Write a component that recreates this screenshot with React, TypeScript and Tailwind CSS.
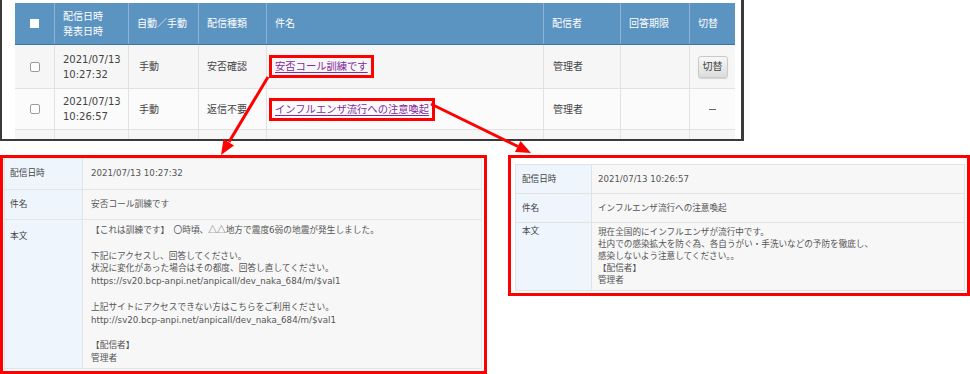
import React from "react";

const FONT = "font-[family-name:DejaVu_Sans,Noto_Sans_CJK_JP,sans-serif]";
const CJK = "font-[family-name:Noto_Sans_CJK_JP,sans-serif]";
const COLS = "grid grid-cols-[39px_74px_70px_68px_277px_77px_69px_46px]";

function HeaderCell({ children, first, center }: { children?: React.ReactNode; first?: boolean; center?: boolean }) {
  return (
    <div
      className={`flex items-center h-[41px] text-white text-[10px] leading-[15px] ${first ? "" : "border-l border-[#8db4d6]"} ${center ? "justify-center" : "pl-[8px]"}`}
    >
      {children}
    </div>
  );
}

function Cell({ children, first, center, pl, bg }: { children?: React.ReactNode; first?: boolean; center?: boolean; pl?: string; bg: string }) {
  return (
    <div
      className={`flex items-center border-b border-[#e2e2e2] ${bg} ${first ? "" : "border-l border-[#e2e2e2]"} ${center ? "justify-center" : pl ?? "pl-[8px]"}`}
    >
      {children}
    </div>
  );
}

function RowCheckbox() {
  return <span className="block w-[10px] h-[10px] bg-white border border-[#9c9c9c] rounded-[2px]" />;
}

function LinkBox({ children }: { children: React.ReactNode }) {
  return (
    <span className="inline-block border-[3px] border-[#ff0000] px-[3px] py-[1px]">
      <span className="text-[#822a9e] underline underline-offset-[2px] text-[10.3px] leading-[12px]">{children}</span>
    </span>
  );
}

function TopTable() {
  const r1 = "bg-[#f6f6f6]";
  const r2 = "bg-[#fbfbfb]";
  const r3 = "bg-[#f6f6f6]";
  return (
    <div className="w-[744px] h-[141px] border-l-2 border-r-[3px] border-b-2 border-[#3a3a3a] bg-white pl-[13px] pt-[3px] overflow-hidden">
      <div className="w-[720px] text-[#444] text-[10px] leading-[15px]">
        <div className={`${COLS} bg-[#5b93c1] border-b border-[#3f75a4]`}>
          <HeaderCell first center>
            <span className="block w-[9px] h-[9px] bg-white" />
          </HeaderCell>
          <HeaderCell>
            <span>
              配信日時
              <br />
              発表日時
            </span>
          </HeaderCell>
          <HeaderCell>自動／手動</HeaderCell>
          <HeaderCell>配信種類</HeaderCell>
          <HeaderCell>件名</HeaderCell>
          <HeaderCell>配信者</HeaderCell>
          <HeaderCell>回答期限</HeaderCell>
          <HeaderCell>切替</HeaderCell>
        </div>
        <div className={`${COLS} h-[44px]`}>
          <Cell first center bg={r1}>
            <RowCheckbox />
          </Cell>
          <Cell bg={r1}>
            <span>
              2021/07/13
              <br />
              10:27:32
            </span>
          </Cell>
          <Cell bg={r1} pl="pl-[10px]">手動</Cell>
          <Cell bg={r1}>安否確認</Cell>
          <Cell bg={r1} pl="pl-[2px]">
            <LinkBox>安否コール訓練です</LinkBox>
          </Cell>
          <Cell bg={r1} pl="pl-[9px]">管理者</Cell>
          <Cell bg={r1} />
          <Cell bg={r1} center>
            <span className="flex items-center justify-center w-[30px] h-[22px] rounded-[3px] border border-[#c9c9c9] bg-gradient-to-b from-[#f8f8f8] to-[#dcdcdc] text-[#444] text-[10px] shadow-[0_1px_1px_rgba(0,0,0,0.15)]">
              切替
            </span>
          </Cell>
        </div>
        <div className={`${COLS} h-[41px]`}>
          <Cell first center bg={r2}>
            <RowCheckbox />
          </Cell>
          <Cell bg={r2}>
            <span>
              2021/07/13
              <br />
              10:26:57
            </span>
          </Cell>
          <Cell bg={r2} pl="pl-[10px]">手動</Cell>
          <Cell bg={r2}>返信不要</Cell>
          <Cell bg={r2} pl="pl-[2px]">
            <LinkBox>インフルエンザ流行への注意喚起</LinkBox>
          </Cell>
          <Cell bg={r2} pl="pl-[9px]">管理者</Cell>
          <Cell bg={r2} />
          <Cell bg={r2} center>
            <span className="block w-[7px] h-[1px] bg-[#666]" />
          </Cell>
        </div>
        <div className={`${COLS} h-[20px]`}>
          <Cell first bg={r3} />
          <Cell bg={r3} />
          <Cell bg={r3} />
          <Cell bg={r3} />
          <Cell bg={r3} />
          <Cell bg={r3} />
          <Cell bg={r3} />
          <Cell bg={r3} />
        </div>
      </div>
    </div>
  );
}

const LEFT_BODY_REST = `下記にアクセスし、回答してください。
状況に変化があった場合はその都度、回答し直してください。
https://sv20.bcp-anpi.net/anpicall/dev_naka_684/m/$val1

上記サイトにアクセスできない方はこちらをご利用ください。
http://sv20.bcp-anpi.net/anpicall/dev_naka_684/m/$val1

【配信者】
管理者`;

const RIGHT_BODY = `現在全国的にインフルエンザが流行中です。
社内での感染拡大を防ぐ為、各自うがい・手洗いなどの予防を徹底し、
感染しないよう注意してください。。
【配信者】
管理者`;

function LeftPanel() {
  return (
    <div className="w-[487px] h-[219px] border-[3px] border-[#ff0000] bg-white pl-[1px] pr-[2px] pb-[2px] flex flex-col">
      <div className="flex-1 flex flex-col border border-[#e4e4e4] text-[8.7px] text-[#555]">
        <div className="flex h-[31px] border-b border-[#e4e4e4]">
          <div className="w-[78px] bg-[#eef5fc] border-r border-[#e4e4e4] flex items-center pl-[5px] text-[#444]">配信日時</div>
          <div className="flex-1 bg-[#f7f7f7] flex items-center pl-[8px]">2021/07/13 10:27:32</div>
        </div>
        <div className="flex h-[30px] border-b border-[#e4e4e4]">
          <div className="w-[78px] bg-[#eef5fc] border-r border-[#e4e4e4] flex items-center pl-[5px] text-[#444]">件名</div>
          <div className="flex-1 bg-[#f7f7f7] flex items-center pl-[8px]">安否コール訓練です</div>
        </div>
        <div className="flex flex-1">
          <div className="w-[78px] bg-[#eef5fc] border-r border-[#e4e4e4] pl-[5px] pt-[10px] text-[#444] leading-[12px]">本文</div>
          <div className="flex-1 bg-[#f7f7f7] pl-[8px] pt-[4px] leading-[12.8px] whitespace-pre-line">
            <div>
              【これは訓練です】　〇時頃、<span className={CJK}>△△</span>地方で震度6弱の地震が発生しました。
            </div>
            <div className="h-[12.8px]" />
            {LEFT_BODY_REST}
          </div>
        </div>
      </div>
    </div>
  );
}

function RightPanel() {
  return (
    <div className="w-[462px] h-[141px] border-[3px] border-[#ff0000] bg-white pl-[4px] pt-[6px] pr-[2px] pb-[2px] flex flex-col">
      <div className="flex-1 flex flex-col border border-[#e2e2e2] text-[8.6px] text-[#555]">
        <div className="flex h-[29px] border-b border-[#e2e2e2]">
          <div className="w-[76px] bg-[#eef5fc] border-r border-[#e2e2e2] flex items-center pl-[6px] text-[#444]">配信日時</div>
          <div className="flex-1 bg-[#f7f7f7] flex items-center pl-[6px]">2021/07/13 10:26:57</div>
        </div>
        <div className="flex h-[29px] border-b border-[#e2e2e2]">
          <div className="w-[76px] bg-[#eef5fc] border-r border-[#e2e2e2] flex items-center pl-[6px] text-[#444]">件名</div>
          <div className="flex-1 bg-[#f7f7f7] flex items-center pl-[6px]">インフルエンザ流行への注意喚起</div>
        </div>
        <div className="flex flex-1">
          <div className="w-[76px] bg-[#eef5fc] border-r border-[#e2e2e2] pl-[6px] pt-[2px] text-[#444] leading-[12px]">本文</div>
          <div className="flex-1 bg-[#f7f7f7] pl-[6px] pt-[3px] leading-[12px] whitespace-pre-line">{RIGHT_BODY}</div>
        </div>
      </div>
    </div>
  );
}

function Arrows() {
  return (
    <svg className="absolute left-0 top-0 pointer-events-none" width="970" height="374" viewBox="0 0 970 374">
      <line x1="268" y1="77" x2="229" y2="142" stroke="#ff0000" strokeWidth="3" />
      <polygon points="221,155 234,145.5 223.5,139" fill="#ff0000" />
      <line x1="431" y1="104" x2="518" y2="146.5" stroke="#ff0000" strokeWidth="3" />
      <polygon points="531,153 515,152 520.5,141" fill="#ff0000" />
    </svg>
  );
}

export default function App() {
  return (
    <div className={`relative w-[970px] h-[374px] bg-white overflow-hidden ${FONT}`}>
      <TopTable />
      <div className="flex items-start mt-[14px]">
        <LeftPanel />
        <div className="ml-[21px]">
          <RightPanel />
        </div>
      </div>
      <Arrows />
    </div>
  );
}
